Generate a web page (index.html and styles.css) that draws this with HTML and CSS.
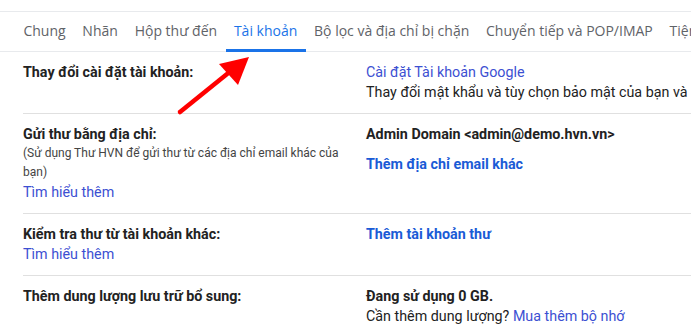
FILE: index.html
```html
<!DOCTYPE html>
<html lang="vi">
<head>
<meta charset="UTF-8">
<meta name="viewport" content="width=device-width, initial-scale=1.0">
<title>Cài đặt - Tài khoản</title>
<link rel="stylesheet" href="styles.css">
</head>
<body>
    <div class="page">
        <!-- thanh tab cài đặt -->
        <div class="tabs">
            <a class="tab">Chung</a>
            <a class="tab">Nhãn</a>
            <a class="tab">Hộp thư đến</a>
            <a class="tab active">Tài khoản</a>
            <a class="tab">Bộ lọc và địa chỉ bị chặn</a>
            <a class="tab">Chuyển tiếp và POP/IMAP</a>
            <a class="tab">Tiện ích</a>
        </div>

        <div class="rows">
            <div class="row">
                <div class="label">
                    <div class="title">Thay đổi cài đặt tài khoản:</div>
                </div>
                <div class="value">
                    <a class="link">Cài đặt Tài khoản Google</a>
                    <div>Thay đổi mật khẩu và tùy chọn bảo mật của bạn và</div>
                </div>
            </div>

            <div class="row">
                <div class="label">
                    <div class="title">Gửi thư bằng địa chỉ:</div>
                    <div class="note">(Sử dụng Thư HVN để gửi thư từ các địa chỉ email khác của bạn)</div>
                    <a class="link">Tìm hiểu thêm</a>
                </div>
                <div class="value">
                    <div class="strong">Admin Domain &lt;admin@demo.hvn.vn&gt;</div>
                    <a class="action add-gap">Thêm địa chỉ email khác</a>
                </div>
            </div>

            <div class="row">
                <div class="label">
                    <div class="title">Kiểm tra thư từ tài khoản khác:</div>
                    <a class="link">Tìm hiểu thêm</a>
                </div>
                <div class="value">
                    <a class="action">Thêm tài khoản thư</a>
                </div>
            </div>

            <div class="row">
                <div class="label">
                    <div class="title">Thêm dung lượng lưu trữ bổ sung:</div>
                </div>
                <div class="value">
                    <div class="strong">Đang sử dụng 0 GB.</div>
                    <div>Cần thêm dung lượng? <a class="link">Mua thêm bộ nhớ</a></div>
                </div>
            </div>
        </div>

        <!-- mũi tên chỉ vào tab Tài khoản -->
        <svg class="arrow" width="691" height="324" viewBox="0 0 691 324">
            <line x1="180" y1="112" x2="232" y2="70" stroke="#ff0000" stroke-width="4.5" stroke-linecap="round"/>
            <polygon points="249,57 219,64 238,85" fill="#ff0000"/>
        </svg>
    </div>
</body>
</html>
```

FILE: styles.css
```css
body {
    margin: 0;
    background: #fff;
    font-family: Roboto, "Noto Sans", sans-serif;
    font-size: 14.3px;
    color: #222;
    overflow: hidden;
}
.page {
    position: relative;
    width: 691px;
    height: 324px;
    overflow: hidden;
}
.tabs {
    margin-top: 11px;
    border-top: 1px solid #e8eaed;
    border-bottom: 1px solid #e8eaed;
    height: 39px;
    display: flex;
    padding-left: 15px;
    white-space: nowrap;
}
.tab {
    display: flex;
    align-items: center;
    padding: 0 8.4px;
    color: #5f6368;
    font-family: "Open Sans", Roboto, sans-serif;
    font-size: 14px;
    margin-bottom: -1px;
    border-bottom: 3px solid transparent;
    flex-shrink: 0;
}
.tab.active {
    color: #1a73e8;
    border-bottom-color: #1a73e8;
}
.rows {
    padding-left: 23px;
}
.row {
    display: flex;
    border-bottom: 1px solid #e0e0e0;
    padding: 10px 0 11px;
    line-height: 20px;
}
.row:last-child {
    border-bottom: none;
}
.label {
    width: 335px;
    padding-right: 8px;
    flex-shrink: 0;
}
.title, .strong {
    font-weight: bold;
    color: #222;
}
.note {
    font-size: 12px;
    line-height: 19px;
    color: #444;
}
.value {
    white-space: nowrap;
}
.link {
    display: inline-block;
    color: #3c50d2;
}
.action {
    display: block;
    color: #1a5bd6;
    font-weight: bold;
}
.add-gap {
    margin-top: 10px;
}
.arrow {
    position: absolute;
    left: 0;
    top: 0;
    pointer-events: none;
}
```
